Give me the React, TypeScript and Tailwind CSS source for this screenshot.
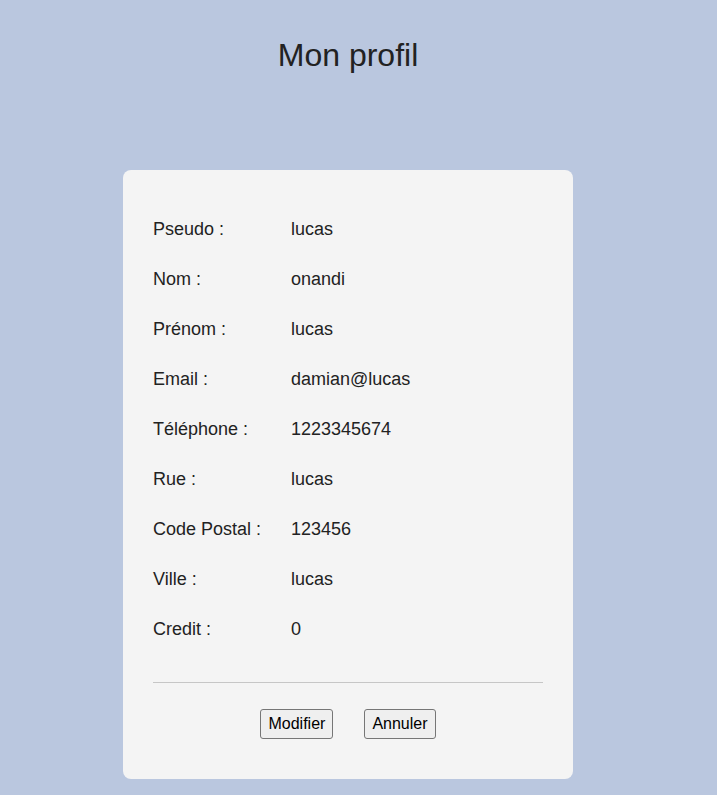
import React from "react";

const rows: [string, string][] = [
  ["Pseudo :", "lucas"],
  ["Nom :", "onandi"],
  ["Prénom :", "lucas"],
  ["Email :", "damian@lucas"],
  ["Téléphone :", "1223345674"],
  ["Rue :", "lucas"],
  ["Code Postal :", "123456"],
  ["Ville :", "lucas"],
  ["Credit :", "0"],
];

export default function App() {
  return (
    <div
      className="min-h-screen bg-[#bac7df] pr-[21px] pt-[37px] pb-4 flex flex-col items-center text-[#222]"
      style={{ fontFamily: '"Liberation Sans", Arial, sans-serif' }}
    >
      <h1 className="text-[32px] leading-[1.15] font-normal">Mon profil</h1>
      <div className="mt-[96px] w-[450px] bg-[#f4f4f4] rounded-[8px] px-[30px] pt-[35px] pb-[40px]">
        {rows.map(([k, v]) => (
          <div key={k} className="h-[50px] flex items-center text-[18px] leading-[1.15]">
            <div className="w-[138px]">{k}</div>
            <div>{v}</div>
          </div>
        ))}
        <div className="mt-[27px] h-px bg-[#c6c6c6]" />
        <div className="mt-[26px] flex justify-center gap-[31px]">
          <button className="h-[30px] px-[7px] text-[16px] bg-[#efefef] border border-[#767676] rounded-[3px] text-black">
            Modifier
          </button>
          <button className="h-[30px] px-[7px] text-[16px] bg-[#efefef] border border-[#767676] rounded-[3px] text-black">
            Annuler
          </button>
        </div>
      </div>
    </div>
  );
}
